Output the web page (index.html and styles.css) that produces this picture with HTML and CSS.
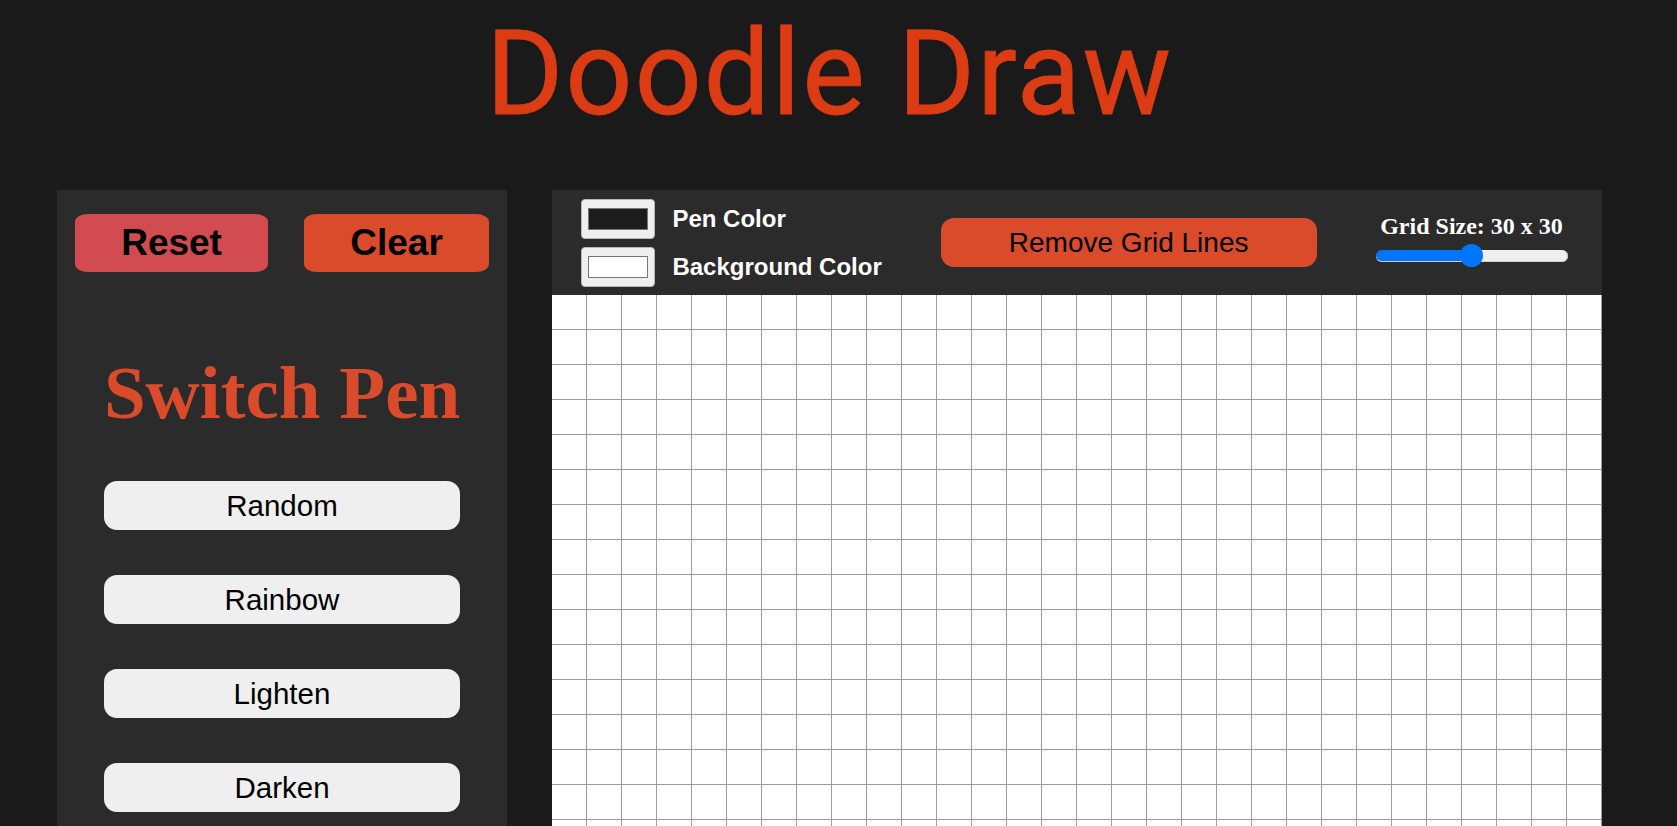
FILE: index.html
```html
<!DOCTYPE html>
<html lang="en">
<head>
<meta charset="utf-8">
<title>Doodle Draw</title>
<link rel="stylesheet" href="styles.css">
</head>
<body>
<div class="app">
  <h1 class="title">Doodle Draw</h1>
  <main class="main">
    <aside class="sidebar">
      <div class="top-actions">
        <button class="btn-action btn-reset">Reset</button>
        <button class="btn-action btn-clear">Clear</button>
      </div>
      <h2 class="switch-title">Switch Pen</h2>
      <div class="pen-list">
        <button class="pen-btn">Random</button>
        <button class="pen-btn">Rainbow</button>
        <button class="pen-btn">Lighten</button>
        <button class="pen-btn">Darken</button>
      </div>
    </aside>
    <section class="board">
      <div class="toolbar">
        <div class="colors">
          <input class="swatch" type="color" id="pen-color" value="#1c1c1c">
          <label class="color-label" for="pen-color">Pen Color</label>
          <input class="swatch" type="color" id="bg-color" value="#ffffff">
          <label class="color-label" for="bg-color">Background Color</label>
        </div>
        <button class="btn-grid">Remove Grid Lines</button>
        <div class="grid-size">
          <label class="grid-size-label" for="size">Grid Size: 30 x 30</label>
          <input class="range" type="range" id="size" min="0" max="60" value="30">
        </div>
      </div>
      <div class="canvas" id="canvas"></div>
    </section>
  </main>
</div>
<script src="script.js"></script>
</body>
</html>
```
FILE: styles.css
```css
html, body {
  overflow: hidden;
}
body {
  margin: 0;
  background: #1a1a1a;
  font-family: "Liberation Sans", Arial, sans-serif;
}
.app {
  width: 1659px;
}
.title {
  margin: 5px 0 47px;
  font-family: Roboto, "Open Sans", sans-serif;
  font-weight: 400;
  font-size: 118px;
  line-height: normal;
  letter-spacing: 1.8px;
  color: #dc3c14;
  -webkit-text-stroke: 0.8px #dc3c14;
  text-align: center;
}
.main {
  display: flex;
  justify-content: center;
  align-items: stretch;
  gap: 45px;
}
.sidebar {
  width: 450px;
  background: #2b2b2b;
  padding-top: 24px;
  box-sizing: border-box;
}
.top-actions {
  display: flex;
  justify-content: space-around;
}
.btn-action {
  height: 58px;
  padding: 0 46px;
  border: none;
  border-radius: 13px / 8px;
  font-family: "Liberation Sans", Arial, sans-serif;
  font-weight: 700;
  font-size: 37px;
  color: #000;
}
.btn-reset {
  background: #d24b50;
}
.btn-clear {
  background: #d94b2b;
}
.switch-title {
  margin: 83px 0 51px;
  font-family: "Liberation Serif", "Times New Roman", serif;
  font-weight: 700;
  font-size: 75px;
  line-height: 75px;
  color: #d94b2b;
  text-align: center;
}
.pen-list {
  display: flex;
  flex-direction: column;
  align-items: center;
  gap: 45px;
}
.pen-btn {
  width: 356px;
  height: 49px;
  border: none;
  border-radius: 13px;
  background: #efefef;
  font-family: "Liberation Sans", Arial, sans-serif;
  font-size: 29.5px;
  color: #000;
}
.board {
  width: 1050px;
  background: #2b2b2b;
}
.toolbar {
  height: 105px;
  padding-right: 5px;
  display: flex;
  align-items: center;
  justify-content: space-around;
}
.colors {
  display: grid;
  grid-template-columns: auto auto;
  column-gap: 17px;
  row-gap: 8px;
  align-items: center;
}
.swatch {
  -webkit-appearance: none;
  appearance: none;
  width: 74px;
  height: 40px;
  margin: 0;
  padding: 2px;
  border: 1px solid #b8b8b8;
  border-radius: 4px;
  background: #efefef;
  box-sizing: border-box;
}
.swatch::-webkit-color-swatch-wrapper {
  padding: 6px 4px;
}
.swatch::-webkit-color-swatch {
  border: 1px solid #777;
  border-radius: 0;
}
.color-label {
  font-weight: 700;
  font-size: 24px;
  color: #fff;
}
.btn-grid {
  width: 376px;
  height: 49px;
  border: none;
  border-radius: 13px;
  background: #d94b2b;
  font-family: "Liberation Sans", Arial, sans-serif;
  font-size: 28px;
  color: #000;
}
.grid-size {
  display: flex;
  flex-direction: column;
  align-items: center;
  padding-bottom: 5px;
}
.grid-size-label {
  font-family: "Liberation Serif", "Times New Roman", serif;
  font-weight: 700;
  font-size: 24px;
  color: #fff;
}
.range {
  -webkit-appearance: none;
  appearance: none;
  width: 192px;
  height: 23px;
  margin: 4px 0 0;
  background: transparent;
}
.range::-webkit-slider-runnable-track {
  height: 12px;
  border-radius: 6px;
  background: linear-gradient(to right, #0075ff 0 50%, #efefef 50% 100%);
  box-shadow: inset -1px 0 0 #c4c4c4, inset 0 -1px 0 #d0d0d0;
}
.range::-webkit-slider-thumb {
  -webkit-appearance: none;
  appearance: none;
  width: 23px;
  height: 23px;
  margin-top: -5.5px;
  border-radius: 50%;
  background: #0075ff;
}
.canvas {
  display: grid;
  grid-template-columns: repeat(30, 35px);
  grid-auto-rows: 35px;
  background: #fff;
}
.cell {
  border-right: 1px solid #9c9c9c;
  border-bottom: 1px solid #9c9c9c;
  box-sizing: border-box;
}
```
FILE: script.js
```js
const canvas = document.getElementById('canvas');
const frag = document.createDocumentFragment();
for (let i = 0; i < 900; i++) {
  const cell = document.createElement('div');
  cell.className = 'cell';
  frag.appendChild(cell);
}
canvas.appendChild(frag);
```
